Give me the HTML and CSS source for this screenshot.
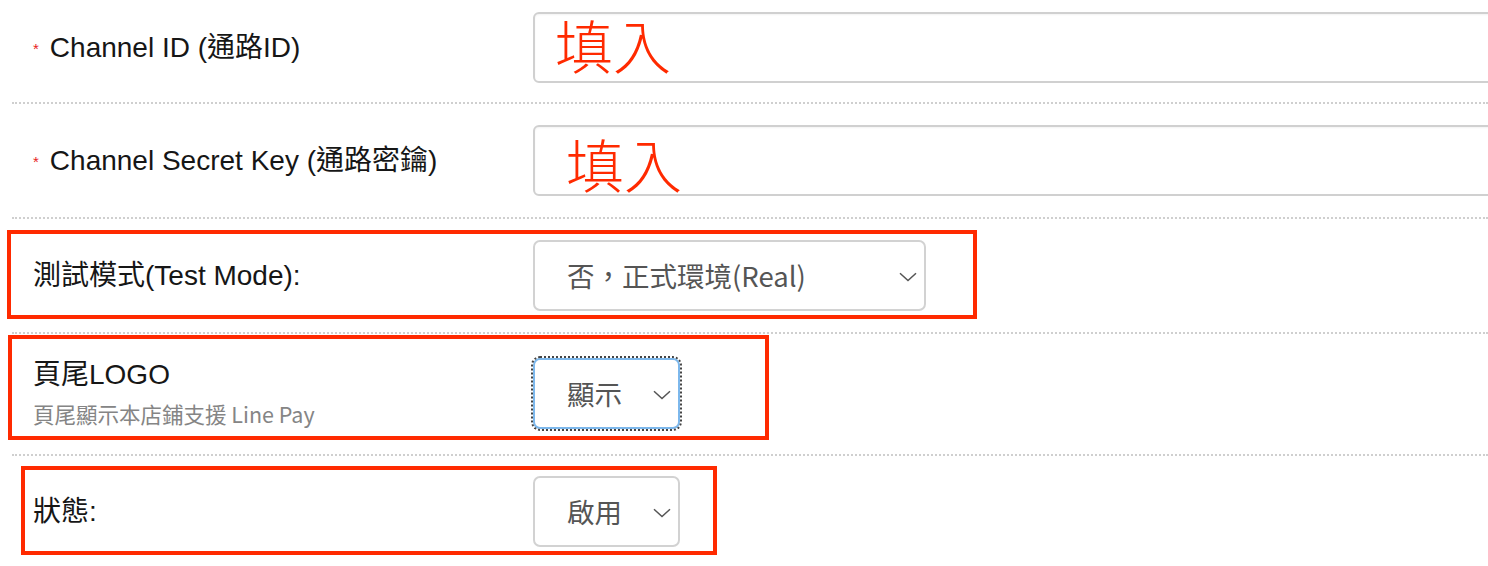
FILE: index.html
```html
<!DOCTYPE html>
<html lang="zh-Hant">
<head>
<meta charset="utf-8">
<title>Line Pay 設定</title>
<link rel="stylesheet" href="styles.css">
</head>
<body>
<div class="page">
  <div class="form">
    <div class="row row-first">
      <div class="label"><span class="req">*</span>Channel ID (通路ID)</div>
      <div class="field"><div class="input"></div></div>
    </div>
    <div class="row">
      <div class="label"><span class="req">*</span>Channel Secret Key (通路密鑰)</div>
      <div class="field"><div class="input"></div></div>
    </div>
    <div class="row">
      <div class="label">測試模式(Test Mode):</div>
      <div class="field">
        <div class="select select-wide"><span>否，正式環境(Real)</span>
          <svg class="chev" width="18" height="10" viewBox="0 0 18 10"><path d="M1 1.2 L9 8.6 L17 1.2" fill="none" stroke="#555" stroke-width="1.5"/></svg>
        </div>
      </div>
    </div>
    <div class="row row-logo">
      <div class="label label-stack">
        <div class="title">頁尾LOGO</div>
        <div class="hint">頁尾顯示本店鋪支援 Line Pay</div>
      </div>
      <div class="field">
        <div class="select select-narrow select-focus"><span>顯示</span>
          <svg class="chev" width="18" height="10" viewBox="0 0 18 10"><path d="M1 1.2 L9 8.6 L17 1.2" fill="none" stroke="#555" stroke-width="1.5"/></svg>
        </div>
      </div>
    </div>
    <div class="row row-last">
      <div class="label">狀態:</div>
      <div class="field">
        <div class="select select-narrow"><span>啟用</span>
          <svg class="chev" width="18" height="10" viewBox="0 0 18 10"><path d="M1 1.2 L9 8.6 L17 1.2" fill="none" stroke="#555" stroke-width="1.5"/></svg>
        </div>
      </div>
    </div>
  </div>

  <div class="note note-1">填入</div>
  <div class="note note-2">填入</div>
  <div class="mark mark-1"></div>
  <div class="mark mark-2"></div>
  <div class="mark mark-3"></div>
</div>
</body>
</html>
```

FILE: styles.css
```css
html, body {
  margin: 0;
  padding: 0;
  background: #fff;
  overflow: hidden;
}
body {
  width: 1488px;
  height: 566px;
  font-family: "Liberation Sans", "Noto Sans CJK TC", sans-serif;
  color: #111;
}
.page {
  position: relative;
  width: 1488px;
  height: 566px;
  overflow: hidden;
}
.form {
  margin-left: 12px;
  width: 1476px;
}
.row {
  display: flex;
  align-items: center;
  padding: 21px 0 21px;
  border-bottom: 2px dotted #cfcfcf;
}
.row-first { padding-top: 12px; padding-bottom: 19px; }
.row-logo { padding-top: 24px; padding-bottom: 25px; }
.row-last { padding-top: 20px; border-bottom: none; }
.label {
  width: 500px;
  flex: 0 0 500px;
  padding-left: 21px;
  font-size: 28px;
  line-height: 32px;
  display: flex;
  align-items: center;
  color: #161616;
}
.req {
  color: #e8221b;
  font-size: 15px;
  margin-right: 11px;
  position: relative;
  top: 1px;
}
.label-stack {
  flex-direction: column;
  align-items: flex-start;
}
.title { line-height: 32px; }
.hint {
  font-size: 21.5px;
  line-height: 28px;
  color: #858585;
  margin-top: 9px;
  font-family: "Noto Sans CJK TC", "Noto Sans", sans-serif;
}
.field {
  flex: 1;
  min-width: 0;
}
.input {
  box-sizing: border-box;
  width: 1100px;
  height: 71px;
  border: 2px solid #d0d0d0;
  border-radius: 6px;
  box-shadow: inset 0 1px 2px rgba(0,0,0,0.05);
  background: #fff;
}
.select {
  box-sizing: border-box;
  height: 71px;
  border: 2px solid #d2d2d2;
  border-radius: 7px;
  background: #fff;
  display: flex;
  align-items: center;
  justify-content: space-between;
  padding: 0 7px 0 32px;
  font-family: "Noto Sans CJK TC", "Noto Sans", sans-serif;
  font-size: 27.5px;
  color: #555;
}
.select span { line-height: 1; }
.select-wide { width: 393px; }
.select-narrow { width: 147px; }
.select-focus {
  border-color: #7db8ec;
  outline: 2px dotted #444;
  outline-offset: 0;
}
.chev { flex: 0 0 auto; margin-top: 2px; }

.note {
  position: absolute;
  font-family: "Noto Sans CJK TC", sans-serif;
  font-weight: 300;
  font-size: 58px;
  line-height: 58px;
  color: #ff2a00;
}
.note-1 { left: 555px; top: 15px; }
.note-2 { left: 566px; top: 134px; }

.mark {
  position: absolute;
  border: 4px solid #ff2a00;
  box-sizing: border-box;
}
.mark-1 { left: 7px; top: 230px; width: 970px; height: 89px; }
.mark-2 { left: 8px; top: 335px; width: 761px; height: 105px; }
.mark-3 { left: 21px; top: 466px; width: 696px; height: 89px; }
```
